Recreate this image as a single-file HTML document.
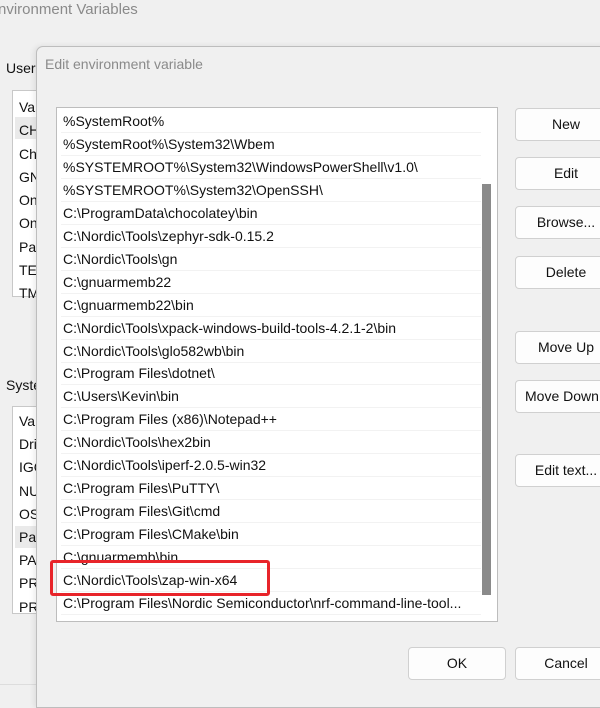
<!DOCTYPE html>
<html><head><style>
body{margin:0;width:600px;height:694px;background:#f0f0f0;position:relative;overflow:hidden;font-family:"Liberation Sans",sans-serif;font-size:14px;color:#111}
.a{position:absolute;white-space:nowrap}
.lb{position:absolute;background:#fff;border:1px solid #c8c8c8}
.btn{position:absolute;background:#fdfdfd;border:1px solid #d0d0d0;border-radius:4px;text-align:center;line-height:31px;height:31px;font-size:14px}
.row{position:absolute;left:4px;height:22px;line-height:22px;border-bottom:1px solid #f2f2f2;width:418px;padding-left:2px}
</style></head><body>
<div class="a" style="left:-2px;top:1px;font-size:15px;color:#8a8a8a">nvironment Variables</div>
<div class="a" style="left:6px;top:60px">User</div>
<div class="lb" style="left:12px;top:90px;width:40px;height:205px"></div>
<div class="a" style="left:15px;top:117px;width:25px;height:22px;background:#eaeaea"></div>
<div class="a" style="left:19px;top:96px;line-height:23.3px">Var<br>CH<br>Ch<br>GN<br>On<br>On<br>Pat<br>TEI<br>TM</div>
<div class="a" style="left:6px;top:377px">Syste</div>
<div class="lb" style="left:12px;top:406px;width:40px;height:206px"></div>
<div class="a" style="left:15px;top:526px;width:25px;height:22px;background:#eaeaea"></div>
<div class="a" style="left:19px;top:410px;line-height:23.2px">Var<br>Dri<br>IGO<br>NU<br>OS<br>Pat<br>PA<br>PR<br>PR</div>
<div class="a" style="left:0;top:684px;width:36px;border-top:1px solid #ddd"></div>

<div class="a" style="left:36px;top:46px;width:580px;height:660px;background:#f0f0f0;border:1px solid #bdbdbd;border-top-left-radius:7px;box-shadow:-2px 0 6px rgba(0,0,0,.08)"></div>
<div class="a" style="left:45px;top:56px;color:#8a8a8a">Edit environment variable</div>

<div class="lb" style="left:56px;top:107px;width:440px;height:513px;border-color:#bdbdbd;overflow:hidden">
<div class="a" style="left:425px;top:76px;width:9px;height:411px;background:#8a8a8a"></div>
<div id="rows"></div>
</div>
<script>
var r=["%SystemRoot%","%SystemRoot%\\System32\\Wbem","%SYSTEMROOT%\\System32\\WindowsPowerShell\\v1.0\\","%SYSTEMROOT%\\System32\\OpenSSH\\","C:\\ProgramData\\chocolatey\\bin","C:\\Nordic\\Tools\\zephyr-sdk-0.15.2","C:\\Nordic\\Tools\\gn","C:\\gnuarmemb22","C:\\gnuarmemb22\\bin","C:\\Nordic\\Tools\\xpack-windows-build-tools-4.2.1-2\\bin","C:\\Nordic\\Tools\\glo582wb\\bin","C:\\Program Files\\dotnet\\","C:\\Users\\Kevin\\bin","C:\\Program Files (x86)\\Notepad++","C:\\Nordic\\Tools\\hex2bin","C:\\Nordic\\Tools\\iperf-2.0.5-win32","C:\\Program Files\\PuTTY\\","C:\\Program Files\\Git\\cmd","C:\\Program Files\\CMake\\bin","C:\\gnuarmemb\\bin","C:\\Nordic\\Tools\\zap-win-x64","C:\\Program Files\\Nordic Semiconductor\\nrf-command-line-tool..."];
var h="";for(var i=0;i<r.length;i++){h+='<div class="row" style="top:'+(2+i*22.95)+'px"></div>';}
document.getElementById("rows").innerHTML=h;
var d=document.querySelectorAll(".row");for(i=0;i<d.length;i++)d[i].textContent=r[i];
</script>
<div class="a" style="left:50px;top:560px;width:214px;height:30px;border:3px solid #e8242a;border-radius:3px"></div>

<div class="btn" style="left:515px;top:108px;width:100px">New</div>
<div class="btn" style="left:515px;top:157px;width:100px">Edit</div>
<div class="btn" style="left:515px;top:206px;width:100px">Browse...</div>
<div class="btn" style="left:515px;top:256px;width:100px">Delete</div>
<div class="btn" style="left:515px;top:331px;width:100px">Move Up</div>
<div class="btn" style="left:515px;top:380px;width:100px;text-align:left;padding-left:9px">Move Down</div>
<div class="btn" style="left:515px;top:454px;width:100px">Edit text...</div>
<div class="btn" style="left:408px;top:647px;width:96px">OK</div>
<div class="btn" style="left:515px;top:647px;width:100px">Cancel</div>
</body></html>
